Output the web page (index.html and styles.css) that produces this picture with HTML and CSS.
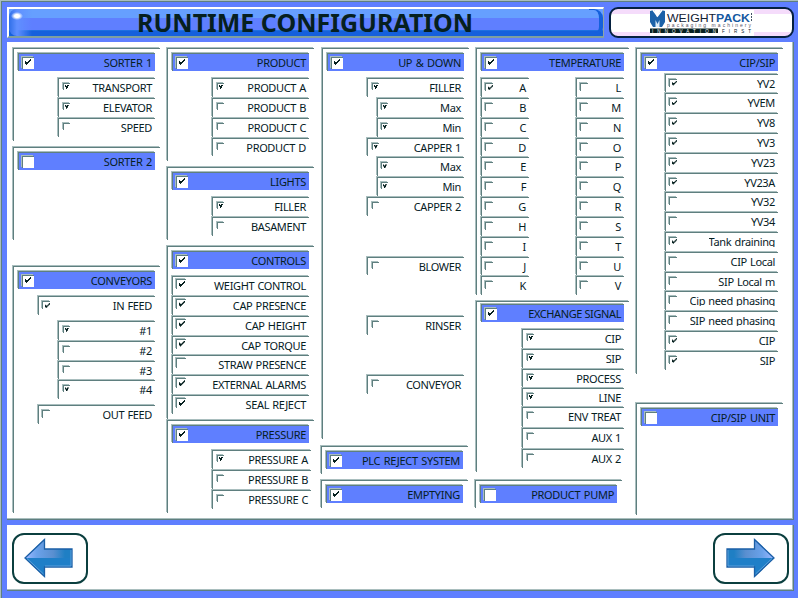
FILE: index.html
```html
<!DOCTYPE html>
<html lang="en">
<head>
<meta charset="utf-8">
<title>Runtime Configuration</title>
<link rel="stylesheet" href="styles.css">
</head>
<body>
<div class="screen">
  <header class="top">
    <h1 class="title"><i class="shine"></i><span>RUNTIME CONFIGURATION</span><i class="cap"></i></h1>
    <div class="brand">
      <svg width="104" height="26" viewBox="0 0 104 26">
        <path d="M0 1L4 0L7 7L11 0L15 1V12L12 17H3L0 12Z" fill="#1b62a8"/>
        <path d="M3 0L7.500 6L12 0" stroke="#fff" stroke-width="1.500" fill="none"/>
        <path d="M5.500 10L7.500 14L9.500 10V17H5.500Z" fill="#dcecf8"/>
        <text x="17" y="11.500" class="logo-a" textLength="83" lengthAdjust="spacingAndGlyphs">WEIGHT<tspan class="logo-b">PACK</tspan></text>
        <path d="M101.500 3v9" stroke="#456" stroke-dasharray="2 1"/>
        <text x="17" y="16.500" class="logo-c" textLength="84">packaging machinery</text>
        <path d="M0 18.500h68v4.500H0z" fill="#06201f"/>
        <text x="2" y="22.500" class="logo-d" textLength="64">INNOVATION</text>
        <text x="72" y="22.500" class="logo-e" textLength="29">FIRST</text>
      </svg>
    </div>
  </header>

  <main class="panel columns">
    <div class="column">
      <section class="group sorter">
        <div class="head on"><i></i><b>SORTER 1</b></div>
        <div class="rows">
          <div class="row on"><i></i><b>TRANSPORT</b></div>
          <div class="row on"><i></i><b>ELEVATOR</b></div>
          <div class="row"><i></i><b>SPEED</b></div>
        </div>
      </section>
      <section class="group sorter-two">
        <div class="head"><i></i><b>SORTER 2</b></div>
      </section>
      <section class="group conveyors">
        <div class="head on"><i></i><b>CONVEYORS</b></div>
        <div class="rows">
          <div class="row mid wide on"><i></i><b>IN FEED</b></div>
          <div class="row spaced on"><i></i><b>#1</b></div>
          <div class="row"><i></i><b>#2</b></div>
          <div class="row"><i></i><b>#3</b></div>
          <div class="row on"><i></i><b>#4</b></div>
          <div class="row mid wide spaced"><i></i><b>OUT FEED</b></div>
        </div>
      </section>
    </div>

    <div class="column">
      <section class="group product">
        <div class="head on"><i></i><b>PRODUCT</b></div>
        <div class="rows">
          <div class="row on"><i></i><b>PRODUCT A</b></div>
          <div class="row"><i></i><b>PRODUCT B</b></div>
          <div class="row"><i></i><b>PRODUCT C</b></div>
          <div class="row"><i></i><b>PRODUCT D</b></div>
        </div>
      </section>
      <section class="group lights">
        <div class="head on"><i></i><b>LIGHTS</b></div>
        <div class="rows">
          <div class="row on"><i></i><b>FILLER</b></div>
          <div class="row"><i></i><b>BASAMENT</b></div>
        </div>
      </section>
      <section class="group controls">
        <div class="head on"><i></i><b>CONTROLS</b></div>
        <div class="rows">
          <div class="row big full on"><i></i><b>WEIGHT CONTROL</b></div>
          <div class="row big full on"><i></i><b>CAP PRESENCE</b></div>
          <div class="row big full on"><i></i><b>CAP HEIGHT</b></div>
          <div class="row big full on"><i></i><b>CAP TORQUE</b></div>
          <div class="row big full"><i></i><b>STRAW PRESENCE</b></div>
          <div class="row big full on"><i></i><b>EXTERNAL ALARMS</b></div>
          <div class="row big full on"><i></i><b>SEAL REJECT</b></div>
        </div>
      </section>
      <section class="group pressure">
        <div class="head on"><i></i><b>PRESSURE</b></div>
        <div class="rows">
          <div class="row on"><i></i><b>PRESSURE A</b></div>
          <div class="row"><i></i><b>PRESSURE B</b></div>
          <div class="row"><i></i><b>PRESSURE C</b></div>
        </div>
      </section>
    </div>

    <div class="column">
      <section class="group updown">
        <div class="head on"><i></i><b>UP &amp; DOWN</b></div>
        <div class="rows">
          <div class="row on"><i></i><b>FILLER</b></div>
          <div class="row nested on"><i></i><b>Max</b></div>
          <div class="row nested on"><i></i><b>Min</b></div>
          <div class="row on"><i></i><b>CAPPER 1</b></div>
          <div class="row nested on"><i></i><b>Max</b></div>
          <div class="row nested on"><i></i><b>Min</b></div>
          <div class="row"><i></i><b>CAPPER 2</b></div>
          <div class="row apart"><i></i><b>BLOWER</b></div>
          <div class="row apart"><i></i><b>RINSER</b></div>
          <div class="row apart"><i></i><b>CONVEYOR</b></div>
        </div>
      </section>
      <section class="group single">
        <div class="head on"><i></i><b>PLC REJECT SYSTEM</b></div>
      </section>
      <section class="group single">
        <div class="head on"><i></i><b>EMPTYING</b></div>
      </section>
    </div>

    <div class="column">
      <section class="group temperature">
        <div class="head on"><i></i><b>TEMPERATURE</b></div>
        <div class="pair">
          <div class="rows">
            <div class="row mid on"><i></i><b>A</b></div>
            <div class="row mid"><i></i><b>B</b></div>
            <div class="row mid"><i></i><b>C</b></div>
            <div class="row mid"><i></i><b>D</b></div>
            <div class="row mid"><i></i><b>E</b></div>
            <div class="row mid"><i></i><b>F</b></div>
            <div class="row mid"><i></i><b>G</b></div>
            <div class="row mid"><i></i><b>H</b></div>
            <div class="row mid"><i></i><b>I</b></div>
            <div class="row mid"><i></i><b>J</b></div>
            <div class="row mid"><i></i><b>K</b></div>
          </div>
          <div class="rows">
            <div class="row mid"><i></i><b>L</b></div>
            <div class="row mid"><i></i><b>M</b></div>
            <div class="row mid"><i></i><b>N</b></div>
            <div class="row mid"><i></i><b>O</b></div>
            <div class="row mid"><i></i><b>P</b></div>
            <div class="row mid"><i></i><b>Q</b></div>
            <div class="row mid"><i></i><b>R</b></div>
            <div class="row mid"><i></i><b>S</b></div>
            <div class="row mid"><i></i><b>T</b></div>
            <div class="row mid"><i></i><b>U</b></div>
            <div class="row mid"><i></i><b>V</b></div>
          </div>
        </div>
      </section>
      <section class="group exchange">
        <div class="head on"><i></i><b>EXCHANGE SIGNAL</b></div>
        <div class="rows">
          <div class="row on"><i></i><b>CIP</b></div>
          <div class="row on"><i></i><b>SIP</b></div>
          <div class="row on"><i></i><b>PROCESS</b></div>
          <div class="row on"><i></i><b>LINE</b></div>
          <div class="row"><i></i><b>ENV TREAT</b></div>
          <div class="row"><i></i><b>AUX 1</b></div>
          <div class="row"><i></i><b>AUX 2</b></div>
        </div>
      </section>
      <section class="group single pump">
        <div class="head"><i></i><b>PRODUCT PUMP</b></div>
      </section>
    </div>

    <div class="column">
      <section class="group cipsip">
        <div class="head on"><i></i><b>CIP/SIP</b></div>
        <div class="rows">
          <div class="row mid on"><i></i><b>YV2</b></div>
          <div class="row mid on"><i></i><b>YVEM</b></div>
          <div class="row mid on"><i></i><b>YV8</b></div>
          <div class="row mid on"><i></i><b>YV3</b></div>
          <div class="row mid on"><i></i><b>YV23</b></div>
          <div class="row mid on"><i></i><b>YV23A</b></div>
          <div class="row mid"><i></i><b>YV32</b></div>
          <div class="row mid"><i></i><b>YV34</b></div>
          <div class="row mid on"><i></i><b class="clip">Tank draining</b></div>
          <div class="row mid"><i></i><b>CIP Local</b></div>
          <div class="row mid"><i></i><b>SIP Local m</b></div>
          <div class="row mid"><i></i><b class="clip">Cip need phasing</b></div>
          <div class="row mid"><i></i><b class="clip">SIP need phasing</b></div>
          <div class="row mid on"><i></i><b>CIP</b></div>
          <div class="row mid on"><i></i><b>SIP</b></div>
        </div>
      </section>
      <section class="group unit">
        <div class="head"><i></i><b>CIP/SIP UNIT</b></div>
      </section>
    </div>
  </main>

  <footer class="panel nav">
    <button class="arrow" aria-label="Previous">
      <svg width="50" height="40" viewBox="0 0 50 40">
        <defs>
          <linearGradient id="fade" x1="0" x2="1"><stop offset="0" stop-color="#9fb8ff"/><stop offset=".25" stop-color="#6aa2ea"/><stop offset=".6" stop-color="#5a8fd0"/><stop offset=".85" stop-color="#1f7fc4"/></linearGradient>
        </defs>
        <path d="M1 20L20.500 1V11H48V29H20.500V39Z" fill="#1f7fc8"/>
        <path d="M1 20L20.500 1V11H48V20Z" fill="url(#fade)"/>
        <path d="M1 20L20.500 1.500V11H48V29H20.500V38.500Z" fill="none" stroke="#1b5fa6" stroke-width="1.300"/>
        <path d="M3 20.500L19.500 36M21 28H47V12" fill="none" stroke="#6aa8e0" stroke-width=".8"/>
      </svg>
    </button>
    <button class="arrow next" aria-label="Next">
      <svg width="50" height="40" viewBox="0 0 50 40">
        <path d="M1 20L20.500 1V11H48V29H20.500V39Z" fill="#1f7fc8"/>
        <path d="M1 20L20.500 1V11H48V20Z" fill="url(#fade)"/>
        <path d="M1 20L20.500 1.500V11H48V29H20.500V38.500Z" fill="none" stroke="#1b5fa6" stroke-width="1.300"/>
        <path d="M3 20.500L19.500 36M21 28H47V12" fill="none" stroke="#6aa8e0" stroke-width=".8"/>
      </svg>
    </button>
  </footer>
</div>
</body>
</html>
```
FILE: styles.css
```css
* { box-sizing: border-box; }

body {
  margin: 0;
  background: #fff;
  color: #06201f;
  font: 11px/18px "Noto Sans", sans-serif;
}

i, b { font-style: normal; font-weight: normal; }

.screen {
  display: flex;
  flex-direction: column;
  width: 798px;
  height: 598px;
  padding: 6px 4px 6px 6px;
  background: #5f7fff;
  border: 0 solid #a9bebe;
  border-width: 1px 0 0 1px;
  box-shadow: inset 1px 1px 0 #5f7f7f;
}

/* header */
.top {
  display: flex;
  justify-content: space-between;
  width: 787px;
  height: 35px;
}

.title {
  display: flex;
  width: 597px;
  height: 31px;
  margin: 0;
  border: 2px solid #fff;
  border-right: 1px solid #8fa5a5;
  border-bottom: 2px solid #7f9f9f;
  background: linear-gradient(#669fff 0 9px, #5f7fff 9px 21px, #1f6fe0 21px 22px, #1560dc 22px);
  font-size: 25px;
  line-height: 30px;
  font-weight: bold;
}

.title span { margin: -2px 0 0 105px; white-space: nowrap; }

.shine {
  width: 23px;
  height: 27px;
  background: radial-gradient(ellipse 6px 4px at 8px 7px, #fff 40%, transparent),
              linear-gradient(90deg, #2f6fe8, #5f8fff 8px, transparent);
  border-radius: 8px 0 0 8px;
}

.cap {
  width: 14px;
  height: 27px;
  margin-left: auto;
  border: 0 solid #1560dc;
  border-width: 1px 4px 3px 0;
  border-radius: 0 9px 9px 0;
}

.brand {
  width: 185px;
  height: 31px;
  padding: 1px 0 0 39px;
  border: 2px solid #04203f;
  border-radius: 9px;
  background: linear-gradient(#f5dcfb 0 5px, #fff 5px 23px, #f5dcfb 23px);
}

.brand svg { display: block; background: #fff; }
.logo-a { font: 11.500px "Liberation Sans", sans-serif; fill: #123; }
.logo-b { font-weight: bold; fill: #14599f; }
.logo-c { font: 5px "Liberation Sans", sans-serif; fill: #556; }
.logo-d { font: 4.500px "Liberation Sans", sans-serif; fill: #fff; }
.logo-e { font: 4.500px "Liberation Sans", sans-serif; fill: #06201f; }

/* panels */
.panel {
  width: 787px;
  background: #fff;
  border: 0 solid #5f7f7f;
  border-width: 0 1px 1px 0;
  box-shadow: inset -1px -1px 0 #a9bebe;
}

.columns {
  display: grid;
  grid-template-columns: 154px 155px 154px 160px 150px;
  height: 478px;
  padding: 5px 0 0 5px;
}

.column { display: flex; flex-direction: column; }

.group, .head, .row, .head i, .row i {
  border: 0 solid #5f7f7f;
  border-width: 1px 0 0 1px;
  box-shadow: -1px -1px 0 #a9bebe;
}

/* the light outer bevel is drawn by the shadow, so shift each frame by one pixel */
.group {
  width: 147px;
  margin-left: 1px;
  margin-top: 1px;
  padding: 3px 5px 0 3px;
}
.head, .row { margin-left: 1px; }
.head { margin-top: 1px; }

.head {
  display: flex;
  height: 18px;
  background: #5f7fff;
}

.head b { margin-left: auto; padding-right: 3px; letter-spacing: -.3px; word-spacing: 1px; }
.exchange .head b { letter-spacing: -.4px; word-spacing: 0; }

.head i {
  position: relative;
  width: 12px;
  height: 12px;
  margin: 3px 0 0 3px;
  background: #fff;
}

.rows {
  display: flex;
  flex-direction: column;
  align-items: flex-end;
  padding-top: 6px;
}

.row {
  display: flex;
  justify-content: space-between;
  width: 97px;
  height: 18.850px;
  margin-top: 1px;
}

.row b { padding-right: 3px; letter-spacing: -.35px; word-spacing: .7px; }
.row b, .head b { white-space: nowrap; }
.row .clip { height: 14px; overflow: hidden; }

.row i {
  position: relative;
  width: 7px;
  height: 7px;
  margin: 4px 0 0 4px;
}

.row.mid i { width: 8px; height: 8px; margin: 4px 0 0 3px; }
.row.big i { width: 10px; height: 10px; margin: 2px 0 0 3px; }

/* tick marks */
.on > i::after {
  content: "";
  position: absolute;
  left: 1px;
  top: 1px;
  width: 4px;
  height: 4px;
  background: #06201f;
  clip-path: polygon(0 0, 25% 0, 25% 25%, 50% 25%, 50% 0, 100% 0, 100% 25%, 75% 25%, 75% 75%, 50% 75%, 50% 100%, 25% 100%, 25% 50%, 0 50%);
}

.head.on > i::after, .row.big.on > i::after, .row.mid.on > i::after {
  left: 2px;
  top: 1px;
  width: 6px;
  height: 6px;
  clip-path: polygon(0 33%, 17% 33%, 17% 50%, 50% 50%, 50% 33%, 67% 33%, 67% 17%, 83% 17%, 83% 0, 100% 0, 100% 33%, 83% 33%, 83% 50%, 67% 50%, 67% 67%, 50% 67%, 50% 83%, 33% 83%, 33% 100%, 17% 100%, 17% 83%, 0 83%);
}

.row.mid.on > i::after { width: 5px; height: 5px; }

/* row widths and gaps */
.row.wide { width: 117px; }
.row.full { width: 137px; }
.row.spaced { margin-top: 6px; }
.row.wide.spaced { margin-top: 5.500px; }
.row.nested { width: 87px; }
.row.nested i { margin-left: 3px; }
.row.apart { margin-top: 40.600px; }

/* group heights */
.sorter, .sorter-two { height: 93px; margin-bottom: 5px; }
.sorter-two { margin-bottom: 25px; }
.conveyors { height: 247px; }
.product { height: 113px; margin-bottom: 5px; }
.lights { height: 73px; margin-bottom: 5px; }
.controls { height: 173px; }
.pressure { height: 93px; }
.pressure .row { width: 99px; margin-right: -2px; }
.updown { height: 391px; margin-bottom: 6px; }
.single { height: 28px; margin: 1px 0 5px 0; }
.temperature { width: 153px; height: 247px; margin-bottom: 5px; }
.temperature .row { width: 48px; }
.pair { display: flex; justify-content: space-between; }
.exchange { width: 153px; height: 171px; margin-bottom: 7px; padding-top: 1px; }
.exchange .row { width: 102px; height: 19px; }
.exchange .row:nth-child(3), .exchange .row:nth-child(4) { height: 18px; }
.exchange .row:nth-child(5), .exchange .row:nth-child(6) { height: 20px; }
.cipsip { height: 326px; margin-bottom: 28px; }
.cipsip .row { width: 113px; height: 18.800px; }
.cipsip .rows { padding-top: 1.600px; }
.unit { height: 112px; }

/* footer */
.nav {
  display: flex;
  justify-content: space-between;
  height: 66px;
  margin-top: 5px;
  padding: 8px 4px 0 5px;
}

.arrow {
  display: flex;
  width: 76px;
  height: 51px;
  padding: 3px 0 0 10px;
  border: 2px solid #0b3f3f;
  border-radius: 12px;
  background: #fff;
}

.next svg { transform: scaleX(-1); }
```
